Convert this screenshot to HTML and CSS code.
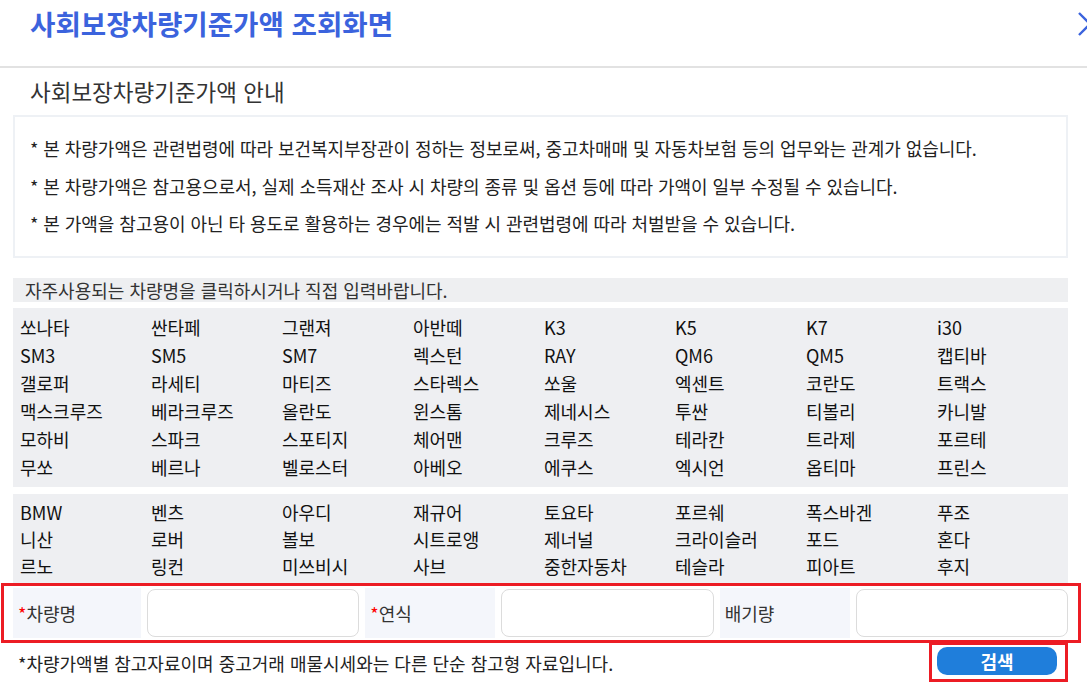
FILE: index.html
```html
<!DOCTYPE html>
<html lang="ko">
<head>
<meta charset="utf-8">
<title>사회보장차량기준가액 조회화면</title>
<link rel="stylesheet" href="styles.css">
</head>
<body>
<header class="header">
  <h1 class="title">사회보장차량기준가액 조회화면</h1>
  <button class="close" type="button" aria-label="닫기">
    <svg width="24" height="24" viewBox="0 0 24 24"><path d="M1 1 L23 23 M23 1 L1 23" stroke="#3b63dd" stroke-width="2.4" fill="none"/></svg>
  </button>
</header>
<main class="content">
  <h2 class="subtitle">사회보장차량기준가액 안내</h2>
  <div class="notice">
    <p>* 본 차량가액은 관련법령에 따라 보건복지부장관이 정하는 정보로써, 중고차매매 및 자동차보험 등의 업무와는 관계가 없습니다.</p>
    <p>* 본 차량가액은 참고용으로서, 실제 소득재산 조사 시 차량의 종류 및 옵션 등에 따라 가액이 일부 수정될 수 있습니다.</p>
    <p>* 본 가액을 참고용이 아닌 타 용도로 활용하는 경우에는 적발 시 관련법령에 따라 처벌받을 수 있습니다.</p>
  </div>
  <div class="hint">자주사용되는 차량명을 클릭하시거나 직접 입력바랍니다.</div>
  <ul class="cars cars-domestic">
    <li>쏘나타</li><li>싼타페</li><li>그랜져</li><li>아반떼</li><li>K3</li><li>K5</li><li>K7</li><li>i30</li>
    <li>SM3</li><li>SM5</li><li>SM7</li><li>렉스턴</li><li>RAY</li><li>QM6</li><li>QM5</li><li>캡티바</li>
    <li>갤로퍼</li><li>라세티</li><li>마티즈</li><li>스타렉스</li><li>쏘울</li><li>엑센트</li><li>코란도</li><li>트랙스</li>
    <li>맥스크루즈</li><li>베라크루즈</li><li>올란도</li><li>윈스톰</li><li>제네시스</li><li>투싼</li><li>티볼리</li><li>카니발</li>
    <li>모하비</li><li>스파크</li><li>스포티지</li><li>체어맨</li><li>크루즈</li><li>테라칸</li><li>트라제</li><li>포르테</li>
    <li>무쏘</li><li>베르나</li><li>벨로스터</li><li>아베오</li><li>에쿠스</li><li>엑시언</li><li>옵티마</li><li>프린스</li>
  </ul>
  <ul class="cars cars-import">
    <li>BMW</li><li>벤츠</li><li>아우디</li><li>재규어</li><li>토요타</li><li>포르쉐</li><li>폭스바겐</li><li>푸조</li>
    <li>니산</li><li>로버</li><li>볼보</li><li>시트로앵</li><li>제너널</li><li>크라이슬러</li><li>포드</li><li>혼다</li>
    <li>르노</li><li>링컨</li><li>미쓰비시</li><li>사브</li><li>중한자동차</li><li>테슬라</li><li>피아트</li><li>후지</li>
  </ul>
  <div class="form-mark">
    <div class="form-row">
      <label class="field-label"><span class="req">*</span>차량명</label>
      <input class="field-input" type="text">
      <label class="field-label"><span class="req">*</span>연식</label>
      <input class="field-input" type="text">
      <label class="field-label">배기량</label>
      <input class="field-input" type="text">
    </div>
  </div>
  <div class="footer">
    <p class="footnote">*차량가액별 참고자료이며 중고거래 매물시세와는 다른 단순 참고형 자료입니다.</p>
    <div class="btn-mark"><button class="search-btn" type="button">검색</button></div>
  </div>
</main>
</body>
</html>
```
FILE: styles.css
```css
html, body {
  margin: 0;
  padding: 0;
  background: #fff;
  overflow: hidden;
}
body {
  font-family: "Noto Sans CJK KR", "Noto Sans", sans-serif;
  color: #222;
}
.header {
  position: relative;
  height: 68px;
  box-sizing: border-box;
  border-bottom: 2px solid #e2e2e2;
  padding: 5px 0 0 30px;
}
.title {
  margin: 0;
  font-size: 27.6px;
  line-height: 36px;
  font-weight: 700;
  color: #3b63dd;
}
.close {
  position: absolute;
  top: 12px;
  left: 1078px;
  width: 24px;
  height: 24px;
  padding: 0;
  border: 0;
  background: none;
}
.close svg { display: block; }
.content {
  padding: 0 19px 0 13px;
}
.subtitle {
  margin: 8px 0 0;
  padding-left: 17px;
  font-size: 22.5px;
  line-height: 30px;
  font-weight: 400;
  color: #333;
}
.notice {
  margin-top: 9px;
  border: 2px solid #eef1f5;
  padding: 13px 0 13px 15px;
}
.notice p {
  margin: 0;
  font-size: 18px;
  line-height: 37.5px;
  letter-spacing: -0.05px;
  color: #222;
}
.hint {
  margin-top: 20px;
  height: 24px;
  background: #eeeff1;
  padding-left: 12px;
  font-size: 18px;
  line-height: 24px;
  color: #333;
}
.cars {
  list-style: none;
  margin: 0;
  background: #eeeff2;
  display: grid;
  grid-template-columns: repeat(8, 131px);
  font-size: 18px;
  color: #111;
}
.cars-domestic {
  margin-top: 6px;
  padding: 5px 7px 6px;
  grid-auto-rows: 28px;
  line-height: 28px;
}
.cars-import {
  margin-top: 7px;
  padding: 5px 7px 3px;
  grid-auto-rows: 27px;
  line-height: 27px;
}
.form-mark {
  margin-left: -12px;
  margin-right: -13px;
  border: 3px solid #ec1c24;
  padding: 2px 10px 2px 9px;
}
.form-row {
  display: grid;
  grid-template-columns: 128px 1fr 130px 1fr 130px 1fr;
  column-gap: 6px;
  height: 50px;
}
.field-label {
  background: #f4f6fb;
  padding-left: 5px;
  font-size: 18px;
  line-height: 50px;
  color: #333;
}
.req { color: #f00; }
.field-input {
  align-self: center;
  height: 48px;
  box-sizing: border-box;
  border: 1px solid #dcdcdc;
  border-radius: 8px;
  background: #fff;
  margin: 0;
}
.footer {
  display: flex;
  justify-content: space-between;
  align-items: center;
  margin-top: -1px;
}
.footnote {
  margin: 0;
  padding: 3px 0 0 5px;
  font-size: 18px;
  line-height: 24px;
  color: #222;
}
.btn-mark {
  border: 3px solid #ec1c24;
  padding: 2px 8px 4px 5px;
}
.search-btn {
  display: block;
  width: 120px;
  height: 28px;
  border: 0;
  border-radius: 10px;
  background: #1f7edb;
  color: #fff;
  font-family: "Noto Sans CJK KR", sans-serif;
  font-size: 18px;
  font-weight: 700;
  line-height: 28px;
  padding: 0;
}
```
